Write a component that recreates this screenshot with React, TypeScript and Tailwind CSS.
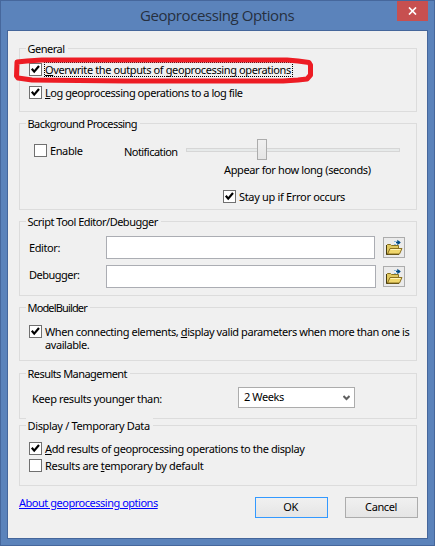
import type { ReactNode } from "react";

function Group({ title, className, children }: { title: ReactNode; className: string; children: ReactNode }) {
  return (
    <section className={`w-[398px] shrink-0 border border-[#dcdcdc] ${className}`}>
      <h2 className="-mt-[8px] ml-[6px] h-[15px] w-fit bg-[#f0f0f0] pl-[1.5px] pr-[3px] leading-[15px]">{title}</h2>
      {children}
    </section>
  );
}

function Box({ checked = false }: { checked?: boolean }) {
  return (
    <span className="block h-[13px] w-[13px] shrink-0 border border-[#707070] bg-white">
      {checked && (
        <svg className="block" width="11" height="11" viewBox="0 0 11 11">
          <path d="M1.8 4.8L4.2 7.6L9 2" fill="none" stroke="#000" strokeWidth="2.2" />
        </svg>
      )}
    </span>
  );
}

function Check({ checked, className = "", children }: { checked?: boolean; className?: string; children: ReactNode }) {
  return (
    <label className={`flex h-[13px] items-start ${className}`}>
      <Box checked={checked} />
      <span className="ml-[3px] leading-[13px]">{children}</span>
    </label>
  );
}

function U({ children }: { children: ReactNode }) {
  return <span className="underline underline-offset-[1px]">{children}</span>;
}

function FolderButton() {
  return (
    <button className="flex h-[21px] w-[22px] shrink-0 items-center justify-center border border-[#acacac] bg-[#ebebeb]">
      <svg width="18" height="17" viewBox="0 0 18 17">
        <path d="M1.5 15.5V6.5L2.5 5.5H5.5L6.5 6.5H13.5V9" fill="#e0c860" stroke="#8a7220" />
        <path d="M1.5 6V15.5H14" fill="none" stroke="#453a10" />
        <path d="M2.5 15L5 9.5H17L14.5 15Z" fill="#f0d76c" stroke="#8a7020" />
        <path d="M5.5 10.5H15.5" stroke="#fff3b8" />
        <path d="M9 2.5H11M9 5.5H11" stroke="#8db9dc" />
        <path d="M10 4H14" stroke="#fff" />
        <path d="M11 3.5H15" stroke="#004a86" strokeWidth="1.6" />
        <path d="M12.3 0.8L15.8 3.5L12.3 6.2Z" fill="#004a86" />
      </svg>
    </button>
  );
}

export default function App() {
  return (
    <div className="relative flex h-[546px] w-[435px] flex-col border border-[#46679c] bg-[#5b83bb] font-['Noto_Sans','DejaVu_Sans',sans-serif] text-[11px] text-black">
      <header className="flex h-[29px] shrink-0">
        <h1 className="w-[396px] pl-[139px] pt-[3px] font-['Open_Sans',sans-serif] text-[15px] leading-[22px] tracking-[-0.42px] whitespace-nowrap text-[#26303f]">
          Geoprocessing Options
        </h1>
        <button className="flex h-[20px] w-[31px] items-center justify-center bg-[#c75050]">
          <svg width="9" height="8" viewBox="0 0 9 8">
            <path d="M1 .5L8 7.5M8 .5L1 7.5" stroke="#fff" strokeWidth="1.7" />
          </svg>
        </button>
      </header>
      <main className="ml-[6px] flex h-[509px] w-[421px] shrink-0 flex-col border border-[#45669b] bg-[#f0f0f0] pl-[11px] pt-[17px] tracking-[-0.4px] whitespace-nowrap">
        <Group title={<span className="tracking-[-0.5px]">General</span>} className="h-[64px]">
          <Check checked className="ml-[9px] mt-[7px]">
            <span className="block w-[247px] tracking-[-0.38px] outline-1 outline-dotted outline-black">
              <U>O</U>verwrite the outputs of geoprocessing operations
            </span>
          </Check>
          <Check checked className="ml-[9px] mt-[10px]">
            <span className="tracking-[-0.45px]"><U>L</U>og geoprocessing operations to a log file</span>
          </Check>
        </Group>
        <Group title={<span className="tracking-[-0.57px]">Background Processing</span>} className="mt-[11px] h-[87px]">
          <div className="mt-[8px] flex h-[21px]">
            <Check className="ml-[14px] mt-[5px] w-[90px]">Enable</Check>
            <span className="mt-[6px] w-[62px] leading-[13px] tracking-[-0.55px]">Notification</span>
            <div className="mt-[9px] h-[4px] w-[214px] border border-[#d6d6d6] bg-[#e7eaea]">
              <div className="-mt-[10px] ml-[70px] h-[21px] w-[10px] border border-[#acacac] bg-linear-to-b from-[#f0f0f0] to-[#e5e5e5]" />
            </div>
          </div>
          <div className="ml-[204px] mt-[3px] leading-[13px] tracking-[-0.38px]">Appear for how long (seconds)</div>
          <Check checked className="ml-[203px] mt-[14px]"><span className="tracking-[-0.32px]">Stay up if Error occurs</span></Check>
        </Group>
        <Group title={<span className="tracking-[-0.5px]">Script Tool Editor/Debugger</span>} className="mt-[11px] h-[75px]">
          <div className="ml-[9px] mt-[7px] flex h-[23px]">
            <span className="mt-[5px] w-[77px] leading-[13px]">Editor:</span>
            <div className="mr-[8px] h-[23px] w-[269px] border border-[#abadb3] bg-white" />
            <div className="mt-px"><FolderButton /></div>
          </div>
          <div className="ml-[9px] mt-[6px] flex h-[23px]">
            <span className="mt-[3px] w-[77px] leading-[13px] tracking-[-0.5px]">Debugger:</span>
            <div className="mr-[7px] h-[23px] w-[270px] border border-[#abadb3] bg-white" />
            <div className="mt-px"><FolderButton /></div>
          </div>
        </Group>
        <Group title={<span className="tracking-[-0.85px]">ModelBuilder</span>} className="mt-[11px] h-[54px]">
          <Check checked className="ml-[9px] mt-[10px]">
            <span className="tracking-[-0.42px]">
              When connecting elements, <U>d</U>isplay valid parameters when more than one is<br />available.
            </span>
          </Check>
        </Group>
        <Group title={<span className="tracking-[-0.55px]">Results Management</span>} className="mt-[12px] h-[46px]">
          <div className="ml-[12px] mt-[6px] flex h-[21px]">
            <span className="mt-[5px] w-[206px] leading-[13px] tracking-[-0.36px]">Keep results younger than:</span>
            <div className="flex h-[21px] w-[117px] items-start justify-between border border-[#acacac] bg-white pl-[5px] pr-[4px]">
              <span className="mt-[2px] leading-[13px]">2 Weeks</span>
              <svg className="mt-[7px]" width="7" height="6" viewBox="0 0 7 6">
                <path d="M.5 1L3.5 4L6.5 1" fill="none" stroke="#606060" strokeWidth="2" />
              </svg>
            </div>
          </div>
        </Group>
        <Group title={<span className="tracking-[-0.34px]">Display / Temporary Data</span>} className="mt-[6px] h-[61px]">
          <Check checked className="ml-[9px] mt-[9px]"><U>A</U>dd results of geoprocessing operations to the display</Check>
          <Check className="ml-[9px] mt-[4px]"><span className="tracking-[-0.32px]">Results are <U>t</U>emporary by default</span></Check>
        </Group>
        <footer className="mt-[11px] flex h-[21px]">
          <a className="-mt-px w-[236px] leading-[13px] tracking-[-0.48px] text-[#0000ff]"><span className="underline">About geoprocessing options</span></a>
          <button className="mr-[17px] h-[21px] w-[73px] border border-[#3399ff] bg-linear-to-b from-[#f0f0f0] to-[#e5e5e5] pr-[2px]">OK</button>
          <button className="h-[21px] w-[73px] border border-[#acacac] bg-linear-to-b from-[#f0f0f0] to-[#e5e5e5] pr-px">Cancel</button>
        </footer>
      </main>
      <svg className="pointer-events-none absolute -left-px -top-px" width="435" height="120" viewBox="0 0 435 120">
        <path d="M17 62L27 61L42 60H287L298 61L309 62.5L310.5 65V75L307 79L298 80L283 81H125L32 80L18 78L16.5 76Z" fill="none" stroke="#ed1c24" strokeWidth="5" strokeLinejoin="round" />
      </svg>
    </div>
  );
}
